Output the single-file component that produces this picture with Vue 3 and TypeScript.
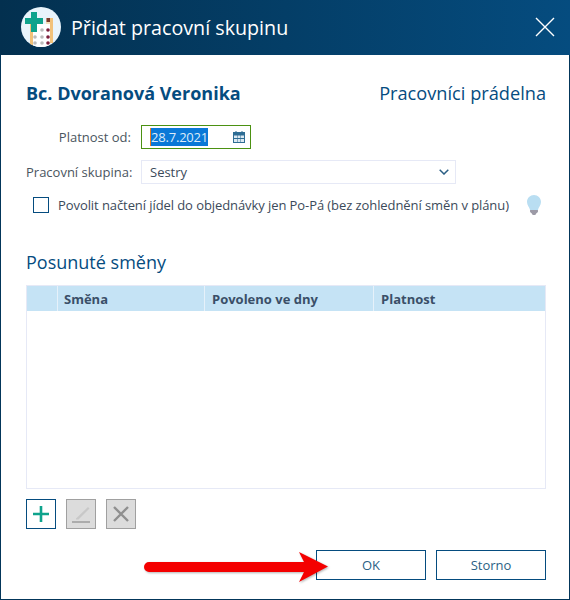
<script setup lang="ts">
const columns = ['', 'Směna', 'Povoleno ve dny', 'Platnost']
</script>

<template>
  <div class="dialog">
    <header class="titlebar">
      <svg class="logo" width="40" height="40" viewBox="0 0 40 40">
        <clipPath id="logo-clip"><circle cx="20" cy="20" r="20" /></clipPath>
        <circle cx="20" cy="20" r="20" fill="#e9f4fb" />
        <g clip-path="url(#logo-clip)">
          <rect x="9" y="16" width="3" height="24" fill="#f2c27a" />
          <rect x="12" y="17" width="17" height="23" fill="#fff" />
          <rect x="29" y="11" width="3" height="25" fill="#f2c27a" />
          <rect x="25" y="11" width="4" height="6" fill="#f6dfb8" />
          <rect x="25.500" y="11" width="3.500" height="4" fill="#7a3b2e" />
          <g fill="#bcbcbc">
            <circle cx="21" cy="23" r="1.800" />
            <circle cx="14" cy="30" r="1.800" />
            <circle cx="21" cy="30" r="1.800" />
            <circle cx="14" cy="36" r="1.800" />
            <circle cx="21" cy="36" r="1.800" />
          </g>
          <g fill="#7c1f3c">
            <circle cx="27" cy="23" r="1.800" />
            <circle cx="27" cy="30" r="1.800" />
            <circle cx="27" cy="36" r="1.800" />
          </g>
        </g>
        <path d="M10 5h6v6h6v6h-6v8h-6v-8H4v-6h6z" fill="#0ea38c" />
      </svg>
      <h1>Přidat pracovní skupinu</h1>
      <svg class="close" width="20" height="20" viewBox="0 0 20 20">
        <path d="M1 1l18 18M19 1L1 19" stroke="#fff" stroke-width="1.4" fill="none" />
      </svg>
    </header>

    <main class="content">
      <div class="person-row">
        <span class="person">Bc. Dvoranová Veronika</span>
        <span class="group">Pracovníci prádelna</span>
      </div>

      <div class="field date-field">
        <label>Platnost od:</label>
        <div class="date-input">
          <span class="caret"></span><span class="selected">28.7.2021</span>
          <svg class="calendar" width="12" height="12" viewBox="0 0 12 12">
            <path d="M0 1h12v11H0z" fill="#2f6d94" />
            <path d="M2.500 0h1v2h-1zM8.500 0h1v2h-1z" fill="#2f6d94" />
            <path d="M1 4.500h3V7H1zM4.500 4.500h3V7h-3zM8 4.500h3V7H8zM1 8h3v3H1zM4.500 8h3v3h-3zM8 8h3v3H8z" fill="#dbe8f1" />
          </svg>
        </div>
      </div>

      <div class="field select-field">
        <label>Pracovní skupina:</label>
        <div class="select">
          <span>Sestry</span>
          <svg width="10" height="6" viewBox="0 0 10 6">
            <path d="M.7.700 5 5l4.300-4.300" stroke="#2b5f85" stroke-width="1.500" fill="none" />
          </svg>
        </div>
      </div>

      <div class="check-row">
        <span class="checkbox"></span>
        <span class="check-label">Povolit načtení jídel do objednávky jen Po-Pá (bez zohlednění směn v plánu)</span>
        <svg class="bulb" width="14" height="20" viewBox="0 0 16 20" preserveAspectRatio="none">
          <path d="M8 0c4.400 0 8 3 8 7 0 3.500-2.800 5-3.500 8h-9C2.800 12 0 10.500 0 7c0-4 3.600-7 8-7z" fill="#b9def2" />
          <path d="M3.500 15h9v2l-2 1.500-1 1.500h-3l-1-1.500-2-1.500z" fill="#9c9aa6" />
        </svg>
      </div>

      <h2>Posunuté směny</h2>

      <div class="grid">
        <div class="grid-head">
          <div v-for="(col, i) in columns" :key="i" class="cell">{{ col }}</div>
        </div>
      </div>

      <div class="tools">
        <button class="tool add">
          <svg width="18" height="18" viewBox="0 0 18 18">
            <path d="M9 1v16M1 9h16" stroke="#0ea38c" stroke-width="2.600" fill="none" />
          </svg>
        </button>
        <button class="tool off">
          <svg width="18" height="18" viewBox="0 0 18 18">
            <path d="M4 13.500 16 2l1.500 1.500-11 11H4z" fill="#c8c8c8" />
            <path d="M0 17h18" stroke="#a0a0a0" stroke-width="1.600" />
          </svg>
        </button>
        <button class="tool off">
          <svg width="16" height="16" viewBox="0 0 16 16">
            <path d="M1 1l14 14M15 1L1 15" stroke="#8f8f8f" stroke-width="2.400" fill="none" />
          </svg>
        </button>
      </div>

      <div class="actions">
        <button class="action">OK</button>
        <button class="action">Storno</button>
      </div>
    </main>

    <svg class="arrow" width="190" height="34" viewBox="0 0 190 34">
      <path d="M5 12h155l-5-10 29 14.500L155 32l5-10H5a5 5 0 0 1 0-10z" fill="#f40000" />
    </svg>
  </div>
</template>

<style>
html,
body {
  margin: 0;
  background: #fff;
}
</style>

<style scoped>
.dialog {
  position: relative;
  box-sizing: border-box;
  width: 570px;
  height: 600px;
  display: flex;
  flex-direction: column;
  border: 1px solid #03365a;
  border-top: 0;
  background: #fff;
  font-family: "Open Sans", "Liberation Sans", sans-serif;
  color: #3b4a5a;
}
.titlebar {
  height: 55px;
  margin: 0 -1px;
  flex-shrink: 0;
  display: flex;
  align-items: center;
  padding: 0 15px 0 21px;
  background: linear-gradient(90deg, #03304f, #054c7f);
}
.logo {
  margin-top: -1px;
}
.titlebar h1 {
  flex: 1;
  margin: 0 0 0 10px;
  font-size: 19.700px;
  font-weight: 400;
  color: #fff;
}
.close {
  margin-top: -1px;
}
.content {
  flex: 1;
  display: flex;
  flex-direction: column;
  padding: 0 23px 0 25px;
  font-size: 13px;
}
.person-row {
  display: flex;
  justify-content: space-between;
  align-items: center;
  height: 24px;
  margin-top: 26px;
}
.person {
  font-size: 18px;
  font-weight: 700;
  color: #054c7f;
}
.group {
  font-size: 18.200px;
  color: #054c7f;
}
.field {
  display: flex;
  align-items: center;
}
.field label {
  width: 105px;
  text-align: right;
  white-space: nowrap;
  margin-right: 10px;
  color: #4a5560;
}
.date-field {
  margin-top: 20px;
}
.date-input {
  box-sizing: border-box;
  position: relative;
  width: 110px;
  height: 24px;
  display: flex;
  align-items: center;
  padding: 0 10px 0 8px;
  border: 1px solid #4b9112;
}
.caret {
  width: 1px;
  height: 18px;
  background: #f07c1e;
}
.selected {
  background: #0a78d7;
  color: #dcebf9;
  line-height: 18px;
  flex: 0 0 auto;
  letter-spacing: -0.2px;
}
.calendar {
  position: absolute;
  right: 5px;
  top: 5px;
}
.select-field {
  margin-top: 11px;
}
.select {
  box-sizing: border-box;
  width: 315px;
  height: 24px;
  display: flex;
  align-items: center;
  justify-content: space-between;
  padding: 0 6px 0 8px;
  border: 1px solid #e6e9f6;
  color: #3b4a5a;
}
.check-row {
  display: flex;
  align-items: center;
  height: 20px;
  margin-top: 11px;
  padding-left: 7px;
}
.checkbox {
  box-sizing: border-box;
  width: 16px;
  height: 16px;
  border: 1px solid #054c7f;
}
.check-label {
  margin-left: 9px;
  flex: 1;
  white-space: nowrap;
  letter-spacing: -0.08px;
}
.bulb {
  margin-right: 5px;
}
.content h2 {
  margin: 35px 0 0;
  font-size: 18px;
  line-height: 24px;
  font-weight: 400;
  color: #054c7f;
}
.grid {
  box-sizing: border-box;
  width: 520px;
  height: 204px;
  margin-top: 11px;
  border: 1px solid #e6e9f6;
}
.grid-head {
  display: grid;
  grid-template-columns: 31px 147px 169px 1fr;
  height: 25px;
  background: #c5e3f5;
}
.cell {
  box-sizing: border-box;
  display: flex;
  align-items: center;
  padding-left: 7px;
  border-right: 1px solid #e6f1fa;
  font-weight: 700;
  color: #3a4f68;
}
.cell:nth-child(2) {
  padding-left: 6px;
}
.cell:last-child {
  border-right: 0;
}
.tools {
  display: flex;
  gap: 10px;
  margin-top: 10px;
}
.tool {
  box-sizing: border-box;
  width: 30px;
  height: 30px;
  padding: 0;
  display: flex;
  align-items: center;
  justify-content: center;
  background: #fff;
  border: 1px solid #054c7f;
}
.tool.off {
  background: #dcdcdc;
  border-color: #a0a0a0;
}
.actions {
  display: flex;
  justify-content: flex-end;
  gap: 10px;
  margin-top: 21px;
}
.action {
  box-sizing: border-box;
  width: 110px;
  height: 30px;
  padding: 0;
  background: #fff;
  border: 1px solid #054c7f;
  font: inherit;
  color: #2b5f85;
}
.arrow {
  position: absolute;
  left: 143px;
  top: 550px;
  filter: drop-shadow(1px 1px 1px rgba(0, 0, 0, 0.3));
}
</style>
